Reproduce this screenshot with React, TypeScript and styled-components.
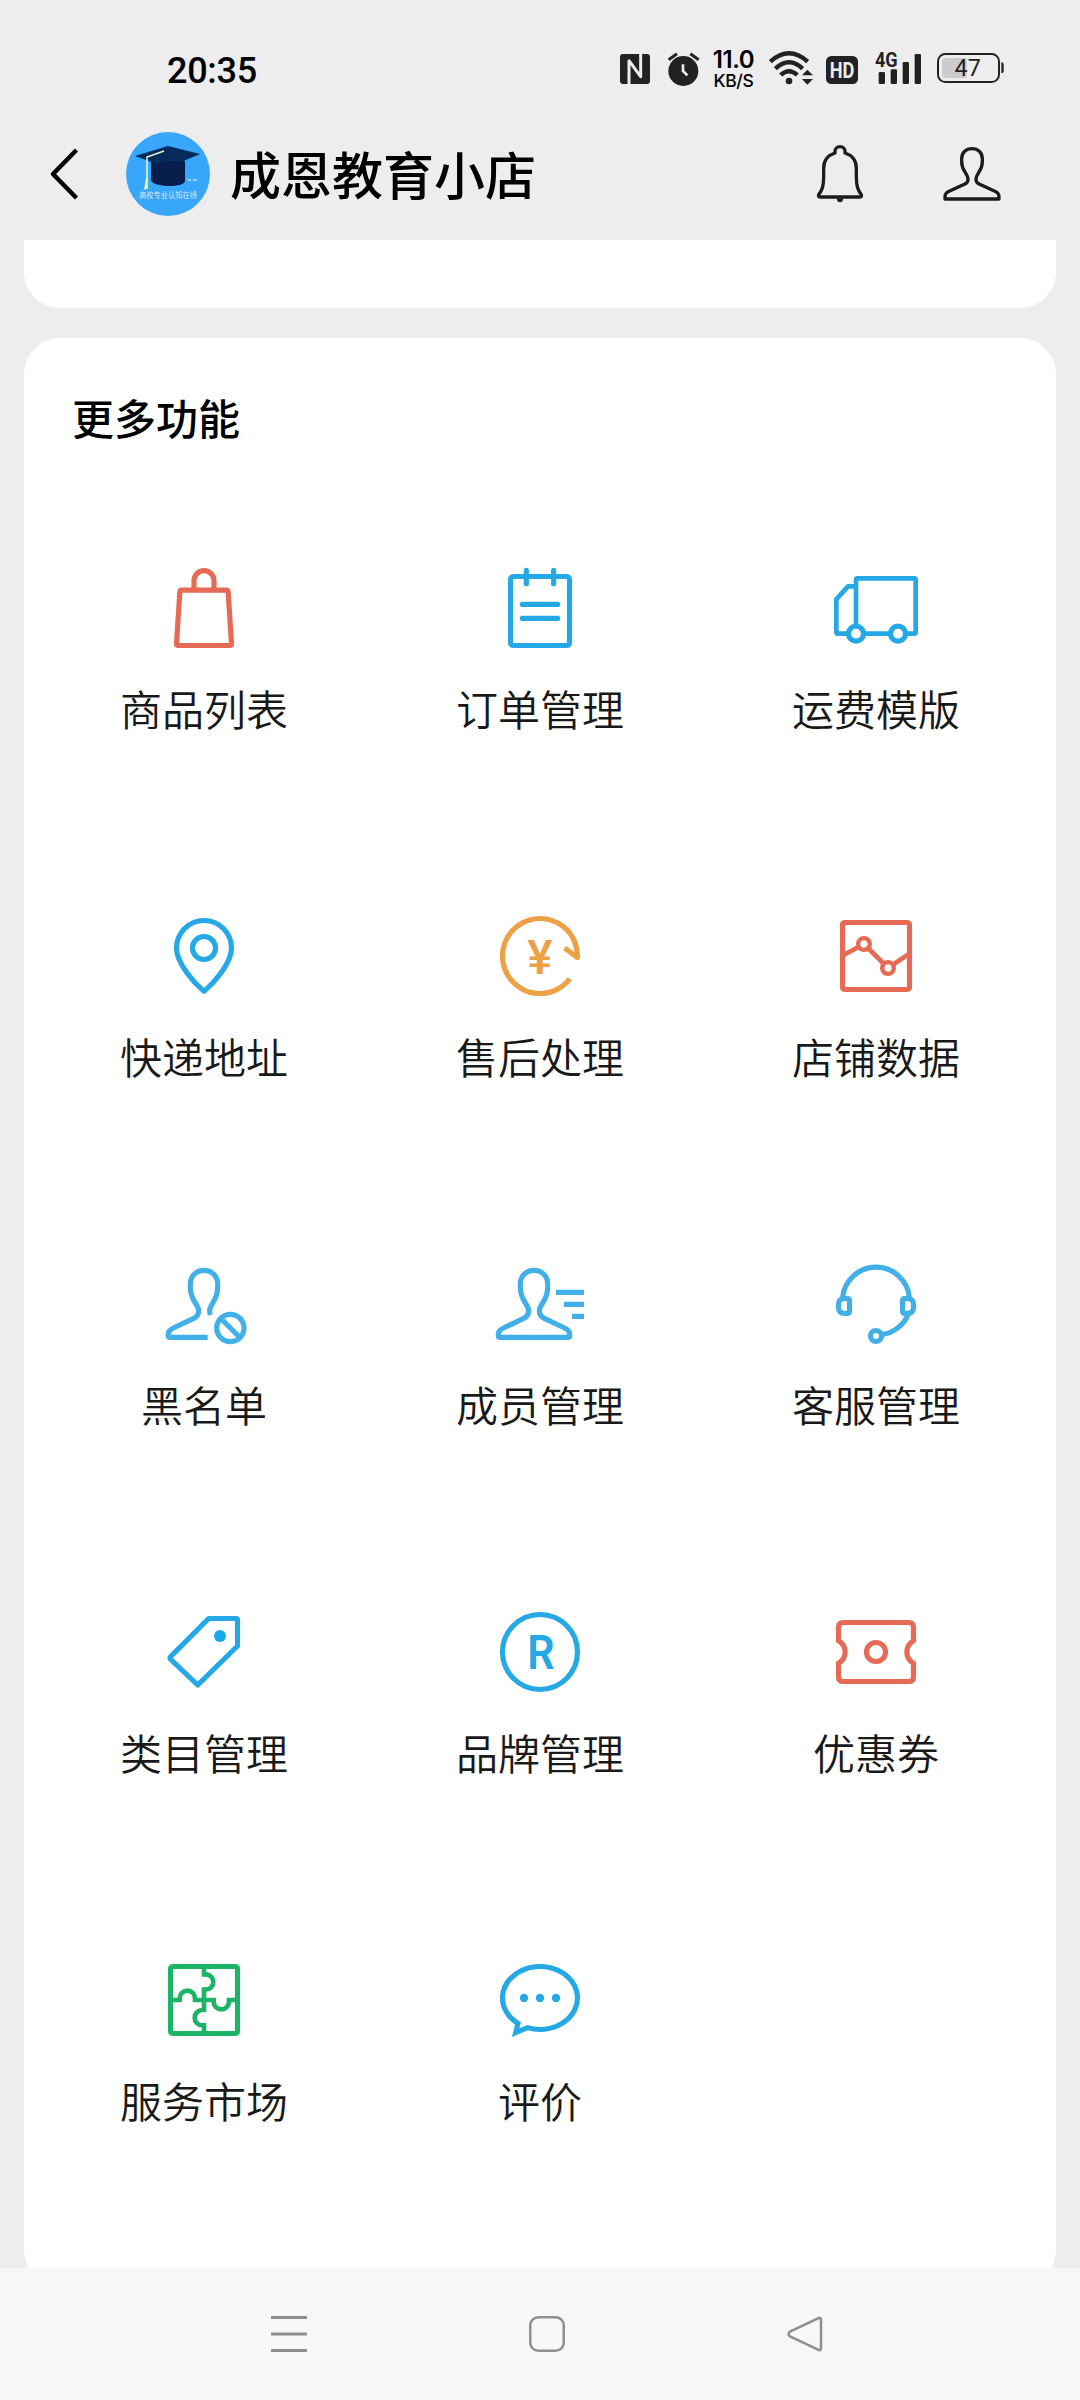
import React from "react";
import styled, { createGlobalStyle } from "styled-components";

const BLUE = "#24a8e6";
const SKY = "#42b0e8";
const RED = "#e66a54";
const ORANGE = "#eda144";
const GREEN = "#1cb568";
const INK = "#222222";

const GlobalStyle = createGlobalStyle`
  * { box-sizing: border-box; }
  html, body { margin: 0; padding: 0; background: #ededed; }
  body { font-family: "Noto Sans CJK SC", sans-serif; color: #000; }
  svg { display: block; flex: none; overflow: visible; }
`;

const Screen = styled.div`
  width: 1080px;
  height: 2400px;
  display: flex;
  flex-direction: column;
  background: #ededed;
  overflow: hidden;
`;

const StatusBar = styled.div`
  height: 108px;
  flex: none;
  padding: 30px 76px 0 167px;
  display: flex;
  justify-content: space-between;
`;

const Clock = styled.div`
  font: 500 36px/82px Roboto, sans-serif;
  letter-spacing: -0.3px;
`;

const StatusIcons = styled.div`
  display: flex;
  align-items: flex-start;
`;

const StatusSlot = styled.div<{ $left?: number; $top: number }>`
  margin-left: ${(p) => p.$left ?? 0}px;
  margin-top: ${(p) => p.$top}px;
  flex: none;
`;

const NetSpeed = styled.div`
  width: 42px;
  display: flex;
  flex-direction: column;
  align-items: center;
  font-family: Inter, sans-serif;
  white-space: nowrap;
`;

const SpeedValue = styled.span`
  font-size: 24px;
  line-height: 23px;
  font-weight: 600;
  letter-spacing: -0.4px;
`;

const SpeedUnit = styled.span`
  font-size: 17.5px;
  line-height: 19px;
  font-weight: 500;
  letter-spacing: -0.3px;
`;

const Header = styled.header`
  height: 132px;
  flex: none;
  padding: 0 79px 0 50px;
  display: flex;
  align-items: center;
`;

const Avatar = styled.div`
  width: 84px;
  height: 84px;
  margin-left: 46px;
  border-radius: 50%;
  overflow: hidden;
  background: #38a6fb;
`;

const ShopName = styled.h1`
  margin: 0 0 2px 20px;
  flex: 1;
  font-size: 51px;
  line-height: 72px;
  font-weight: 500;
`;

const HeaderActions = styled.div`
  display: flex;
  align-items: center;
  gap: 79px;
`;

const Content = styled.main`
  flex: 1;
  min-height: 0;
  padding: 0 24px;
  display: flex;
  flex-direction: column;
  gap: 30px;
  overflow: hidden;
`;

const PreviousCard = styled.section`
  height: 68px;
  flex: none;
  background: #fff;
  border-radius: 0 0 36px 36px;
`;

const Card = styled.section`
  height: 1948px;
  flex: none;
  padding: 49px 12px 0;
  background: #fff;
  border-radius: 36px;
`;

const CardTitle = styled.h2`
  margin: 0 0 0 36px;
  font-size: 42px;
  line-height: 60px;
  font-weight: 500;
`;

const Grid = styled.div`
  margin-top: 113px;
  display: grid;
  grid-template-columns: repeat(3, 336px);
  grid-auto-rows: 348px;
`;

const Cell = styled.div`
  display: flex;
  flex-direction: column;
  align-items: center;
`;

const CellLabel = styled.span`
  margin-top: 22px;
  font-size: 42px;
  line-height: 60px;
  font-weight: 350;
  color: #191919;
`;

const NavBar = styled.nav`
  height: 132px;
  flex: none;
  padding-left: 271px;
  display: flex;
  align-items: center;
  gap: 222px;
  background: #f7f7f7;
`;

function FeatureIcon({ color, children }: { color: string; children: React.ReactNode }) {
  return (
    <svg
      width="96"
      height="96"
      viewBox="-144 -144 288 288"
      fill="none"
      stroke={color}
      strokeWidth="15.5"
      strokeLinejoin="round"
    >
      {children}
    </svg>
  );
}

const HEAD_LEFT = "M0 -101C-24 -101 -41 -83 -41 -60V-50C-41 -8 -16 0 -16 20C-16 33 -21 38 -31 43L-92 72Q-107 79 -107 92V97Q-107 100 -103 100";

const features = [
  {
    label: "商品列表",
    icon: (
      <FeatureIcon color={RED}>
        <path d="M-67 -53.500H67Q72 -53.500 72.500 -48L82.500 107Q83 112.500 78 112.500H-78Q-83 112.500 -82.500 107L-72.500 -48Q-72 -53.500 -67 -53.500Z" />
        <path d="M-30 -53V-82a30 30 0 0 1 60 0V-53" />
      </FeatureIcon>
    ),
  },
  {
    label: "订单管理",
    icon: (
      <FeatureIcon color={BLUE}>
        <rect x="-88.5" y="-94.5" width="177" height="207" rx="8" />
        <path strokeLinecap="round" d="M-41 -113V-73M41 -113V-73M-53 -11H53M-53 31H53" />
      </FeatureIcon>
    ),
  },
  {
    label: "运费模版",
    icon: (
      <FeatureIcon color={BLUE}>
        <path strokeWidth="14" d="M-60 77V-84Q-60 -89 -55 -89H114Q119 -89 119 -84V72Q119 77 114 77Z" />
        <path strokeWidth="14" d="M-60 -65H-84L-119 -26V72Q-119 77 -114 77H-60" />
        <circle cx="-60" cy="77" r="22.5" fill="#fff" />
        <circle cx="66" cy="77" r="22.5" fill="#fff" />
      </FeatureIcon>
    ),
  },
  {
    label: "快递地址",
    icon: (
      <FeatureIcon color={BLUE}>
        <path d="M0 106C-30 80 -82.500 22 -82.500 -24A82.500 82.500 0 0 1 82.500 -24C82.500 22 30 80 0 106Z" />
        <circle cx="0" cy="-24" r="34.500" />
      </FeatureIcon>
    ),
  },
  {
    label: "售后处理",
    icon: (
      <FeatureIcon color={ORANGE}>
        <path d="M89.500 68.200A112.500 112.500 0 1 1 112.400 5L74 -24" />
        <text
          x="0"
          y="53"
          textAnchor="middle"
          fontFamily="Roboto, sans-serif"
          fontWeight="500"
          fontSize="143"
          fill={ORANGE}
          stroke="none"
        >
          ¥
        </text>
      </FeatureIcon>
    ),
  },
  {
    label: "店铺数据",
    icon: (
      <FeatureIcon color={RED}>
        <rect x="-100.5" y="-100.5" width="201" height="201" rx="7" />
        <path strokeWidth="14" d="M-97 -3L-36 -36L36 36L97 -5" />
        <circle cx="-36" cy="-36" r="17.500" strokeWidth="13" fill="#fff" />
        <circle cx="36" cy="36" r="17.500" strokeWidth="13" fill="#fff" />
      </FeatureIcon>
    ),
  },
  {
    label: "黑名单",
    icon: (
      <FeatureIcon color={SKY}>
        <path d={HEAD_LEFT + "H11"} />
        <path d="M0 -101C24 -101 41 -83 41 -60V-50C41 -8 16 0 17 20Q17 27 19 33" />
        <circle cx="79" cy="72" r="41" />
        <path d="M52 45L106 99" />
      </FeatureIcon>
    ),
  },
  {
    label: "成员管理",
    icon: (
      <FeatureIcon color={SKY}>
        <g transform="translate(-18 0)">
          <path d={HEAD_LEFT + "H2"} />
          <path transform="scale(-1 1)" d={HEAD_LEFT + "H0"} />
        </g>
        <path d="M48 -35H132M72 1H132M96 37H132" />
      </FeatureIcon>
    ),
  },
  {
    label: "客服管理",
    icon: (
      <FeatureIcon color={SKY}>
        <path d="M-100 -20A100.500 100.500 0 0 1 100 -20" />
        <path d="M-79.500 -10V22Q-79.500 28.500 -86 28.500H-94Q-112.500 28.500 -112.500 10V2Q-112.500 -16.500 -94 -16.500H-86Q-79.500 -16.500 -79.500 -10Z" />
        <path d="M79.500 -10V22Q79.500 28.500 86 28.500H94Q112.500 28.500 112.500 10V2Q112.500 -16.500 94 -16.500H86Q79.500 -16.500 79.500 -10Z" />
        <path d="M18 92A101 101 0 0 0 97 30" />
        <circle cx="0" cy="96" r="16.500" />
      </FeatureIcon>
    ),
  },
  {
    label: "类目管理",
    icon: (
      <FeatureIcon color={BLUE}>
        <path d="M14 -100.500H96Q100.500 -100.500 100.500 -96V-18L-19 99L-100 22Q-104 18 -100 14Z" />
        <circle cx="48" cy="-48" r="18" fill="#17a9f0" stroke="none" />
      </FeatureIcon>
    ),
  },
  {
    label: "品牌管理",
    icon: (
      <FeatureIcon color={BLUE}>
        <circle cx="0" cy="0" r="112.500" />
        <text
          x="3"
          y="51"
          textAnchor="middle"
          textLength="82"
          lengthAdjust="spacingAndGlyphs"
          fontFamily="Roboto, sans-serif"
          fontWeight="600"
          fontSize="143"
          fill={BLUE}
          stroke="none"
        >
          R
        </text>
      </FeatureIcon>
    ),
  },
  {
    label: "优惠券",
    icon: (
      <FeatureIcon color={RED}>
        <path
          strokeLinejoin="miter"
          d="M-98 -88.500H98Q112.500 -88.500 112.500 -74V-34A39 39 0 0 0 112.500 34V74Q112.500 88.500 98 88.500H-98Q-112.500 88.500 -112.500 74V34A39 39 0 0 0 -112.500 -34V-74Q-112.500 -88.500 -98 -88.500Z"
        />
        <circle cx="0" cy="0" r="28.500" />
      </FeatureIcon>
    ),
  },
  {
    label: "服务市场",
    icon: (
      <FeatureIcon color={GREEN}>
        <rect x="-100.5" y="-100.5" width="201" height="201" rx="7" />
        <path
          strokeWidth="14"
          strokeLinejoin="miter"
          d="M0 -100V-77H5a23 23 0 0 1 0 46H0V0M0 100V76H-5a23 23 0 0 1 0 -46H0V0M-100 0H-73V-5a23 23 0 0 1 46 0V0H0M100 0H75V5a23 23 0 0 1 -46 0V0H0"
        />
      </FeatureIcon>
    ),
  },
  {
    label: "评价",
    icon: (
      <FeatureIcon color={BLUE}>
        <path
          strokeLinejoin="miter"
          d="M-66 70.500A112.500 94.500 0 1 1 -38 82.900L-73 98Z"
        />
        <g fill={BLUE} stroke="none">
          <circle cx="-48" cy="-6" r="12.500" />
          <circle cx="0" cy="-6" r="12.500" />
          <circle cx="48" cy="-6" r="12.500" />
        </g>
      </FeatureIcon>
    ),
  },
];

function NfcIcon() {
  return (
    <svg width="30" height="30" viewBox="0 0 90 90">
      <rect width="90" height="90" rx="9" fill={INK} />
      <path
        d="M27 90V20L62 68V0"
        fill="none"
        stroke="#ededed"
        strokeWidth="9"
        strokeLinejoin="round"
      />
    </svg>
  );
}

function AlarmIcon() {
  return (
    <svg width="32" height="34" viewBox="0 0 96 102">
      <circle cx="46" cy="57" r="45" fill={INK} />
      <path d="M2 23L27 5M92 23L67 5" stroke={INK} strokeWidth="9" />
      <path d="M45 37V57L58 70" fill="none" stroke="#ededed" strokeWidth="8" />
    </svg>
  );
}

function WifiIcon() {
  return (
    <svg width="44" height="34" viewBox="0 0 132 102" fill="none" stroke={INK} strokeWidth="13">
      <path d="M4 32Q60 -18 116 32" />
      <path d="M19 53Q60 15 101 53" />
      <path d="M35 72Q60 49 85 72" />
      <circle cx="60" cy="90" r="10" fill={INK} stroke="none" />
      <path d="M99 73L115 56L132 73ZM99 84L115 101L132 84Z" fill={INK} stroke="none" />
    </svg>
  );
}

function HdIcon() {
  return (
    <svg width="32" height="28" viewBox="0 0 96 84">
      <rect width="96" height="84" rx="16" fill={INK} />
      <text
        x="48"
        y="65"
        textAnchor="middle"
        textLength="74"
        lengthAdjust="spacingAndGlyphs"
        fontFamily="Roboto, sans-serif"
        fontWeight="700"
        fontSize="66"
        fill="#ededed"
      >
        HD
      </text>
    </svg>
  );
}

function SignalIcon() {
  return (
    <svg width="46" height="32" viewBox="0 0 138 96" fill={INK}>
      <text
        x="0"
        y="45"
        textLength="68"
        lengthAdjust="spacingAndGlyphs"
        fontFamily="Roboto, sans-serif"
        fontWeight="700"
        fontSize="62"
      >
        4G
      </text>
      <rect x="11" y="60" width="19" height="36" rx="4" />
      <rect x="47" y="52" width="19" height="44" rx="4" />
      <rect x="83" y="30" width="19" height="66" rx="4" />
      <rect x="119" y="6" width="19" height="90" rx="4" />
    </svg>
  );
}

function BatteryIcon() {
  return (
    <svg width="67" height="30" viewBox="0 0 201 90">
      <rect x="3" y="3" width="183" height="84" rx="22" fill="none" stroke={INK} strokeWidth="6" />
      <path d="M89 15V75H28Q15 75 15 62V28Q15 15 28 15Z" fill="#cccccc" />
      <path d="M193 28Q200 28 200 34V55Q200 61 193 61Z" fill={INK} />
      <text
        x="92"
        y="70"
        textAnchor="middle"
        fontFamily="Roboto, sans-serif"
        fontWeight="450"
        fontSize="70"
        fill={INK}
      >
        47
      </text>
    </svg>
  );
}

function AvatarPicture() {
  return (
    <svg width="84" height="84" viewBox="0 0 84 84">
      <path d="M25 29L59 29V49Q58 54 42 54Q26 53 25 48Z" fill="#071d4c" />
      <path d="M42 14L74 22L55 30Q42 27 31 32L9 24Z" fill="#052a5c" />
      <path d="M38 19L21 25V57" fill="none" stroke="#e8f6c8" strokeWidth="1.500" />
      <path d="M20 46L22 46L22 56L18 58Z" fill="#e0f29a" />
      <path d="M62 48H65M67 48H71" stroke="#bfe3ff" strokeWidth="1.500" />
      <text
        x="42"
        y="66"
        textAnchor="middle"
        textLength="58"
        lengthAdjust="spacingAndGlyphs"
        fontFamily="Noto Sans CJK SC, sans-serif"
        fontSize="7.500"
        fill="#d5ebfd"
      >
        高校专业认知在线
      </text>
    </svg>
  );
}

export default function App() {
  return (
    <Screen>
      <GlobalStyle />
      <StatusBar>
        <Clock>20:35</Clock>
        <StatusIcons>
          <StatusSlot $top={24}><NfcIcon /></StatusSlot>
          <StatusSlot $left={17.5} $top={22}><AlarmIcon /></StatusSlot>
          <StatusSlot $left={13} $top={18}>
            <NetSpeed>
              <SpeedValue>11.0</SpeedValue>
              <SpeedUnit>KB/S</SpeedUnit>
            </NetSpeed>
          </StatusSlot>
          <StatusSlot $left={14.5} $top={21}><WifiIcon /></StatusSlot>
          <StatusSlot $left={13} $top={26}><HdIcon /></StatusSlot>
          <StatusSlot $left={17} $top={22}><SignalIcon /></StatusSlot>
          <StatusSlot $left={16} $top={23}><BatteryIcon /></StatusSlot>
        </StatusIcons>
      </StatusBar>

      <Header>
        <svg width="30" height="52" viewBox="0 0 30 52" fill="none" stroke="#000" strokeWidth="4.500">
          <path d="M26.500 2L3 26L26.500 50" strokeLinejoin="round" />
        </svg>
        <Avatar><AvatarPicture /></Avatar>
        <ShopName>成恩教育小店</ShopName>
        <HeaderActions>
          <svg width="48" height="58" viewBox="0 0 144 174" fill="none" stroke="#1c1c1c" strokeWidth="10" strokeLinejoin="round">
            <path d="M57 24V18a15 13 0 0 1 30 0V24C112 32 121 48 121 70V95C121 125 126 136 136 149Q138 156 132 156H12Q6 156 8 149C18 136 23 125 23 95V70C23 48 32 32 57 24Z" />
            <path d="M62 160H82Q81 172 72 172Q63 172 62 160Z" fill="#1c1c1c" stroke="none" />
          </svg>
          <svg width="58" height="56" viewBox="-87 -84 174 168" fill="none" stroke="#1c1c1c" strokeWidth="10" strokeLinejoin="round">
            <path d="M0 -76C-19 -76 -31 -63 -31 -46V-37C-31 -8 -11 -2 -12 17C-12 24 -15 27 -23 31L-67 51Q-81 57 -81 68V75H81V68Q81 57 67 51L23 31C15 27 12 24 12 17C11 -2 31 -8 31 -37V-46C31 -63 19 -76 0 -76Z" />
          </svg>
        </HeaderActions>
      </Header>

      <Content>
        <PreviousCard />
        <Card>
          <CardTitle>更多功能</CardTitle>
          <Grid>
            {features.map((f) => (
              <Cell key={f.label}>
                {f.icon}
                <CellLabel>{f.label}</CellLabel>
              </Cell>
            ))}
          </Grid>
        </Card>
      </Content>

      <NavBar>
        <svg width="36" height="36" viewBox="0 0 36 36" stroke="#8f8f8f" strokeWidth="3">
          <path d="M0 1.500H36M0 18H36M0 34.500H36" />
        </svg>
        <svg width="36" height="36" viewBox="0 0 36 36" fill="none" stroke="#8f8f8f" strokeWidth="2.500">
          <rect x="1.250" y="1.250" width="33.500" height="33.500" rx="8" />
        </svg>
        <svg width="36" height="36" viewBox="0 0 36 36" fill="none" stroke="#8f8f8f" strokeWidth="2.500">
          <path d="M31 2.500Q34 0.500 34 4V32Q34 35.500 31 33.500L3 20.500Q0 18 3 15.500Z" />
        </svg>
      </NavBar>
    </Screen>
  );
}
